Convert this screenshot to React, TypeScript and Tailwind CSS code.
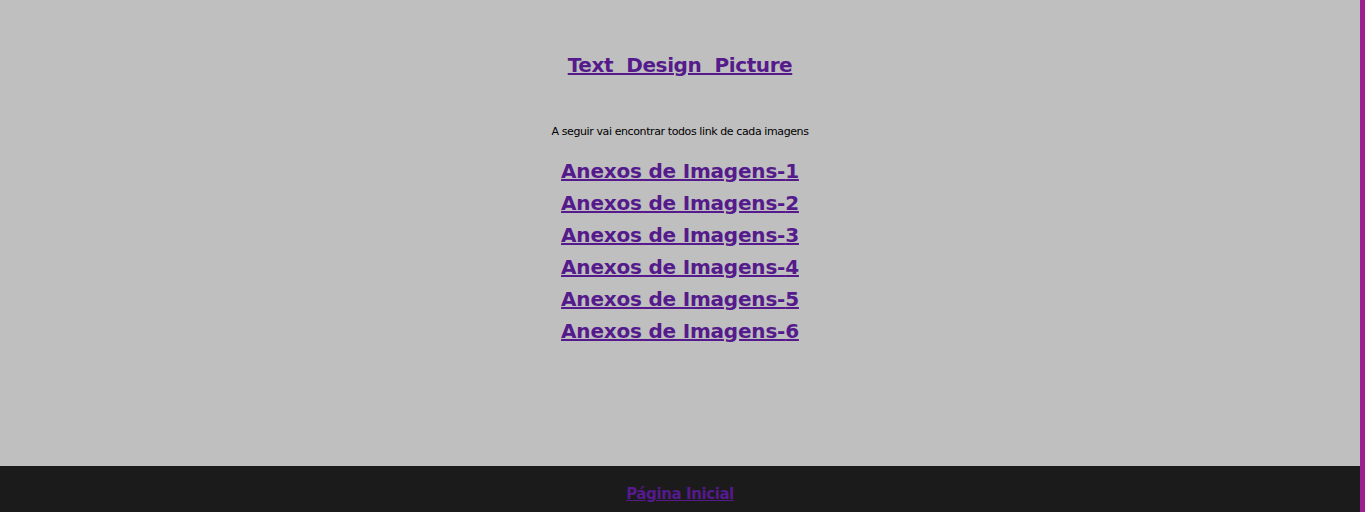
import React from "react";

const font = { fontFamily: '"Comic Sans MS", "DejaVu Sans", sans-serif' };

export default function App() {
  const links = [1, 2, 3, 4, 5, 6];
  return (
    <div className="flex h-[512px] w-full overflow-hidden" style={font}>
      <div className="flex flex-1 flex-col bg-[#bfbfbf]">
        <main className="flex h-[466px] flex-col items-center">
          <h1 className="mt-[52px] text-[20px] font-bold leading-[26px] tracking-[-0.4px]">
            <a href="#" className="text-[#551a8b] underline">Text&nbsp; Design&nbsp; Picture</a>
          </h1>
          <p className="mt-[47px] text-[11px] leading-[14px] tracking-[-0.4px] text-black">A seguir vai encontrar todos link de cada imagens</p>
          <ul className="mt-[16px] flex flex-col items-center">
            {links.map((n) => (
              <li key={n} className="text-[20px] font-bold leading-[32px] tracking-[-0.2px]">
                <a href="#" className="text-[#551a8b] underline">Anexos de Imagens-{n}</a>
              </li>
            ))}
          </ul>
        </main>
        <footer className="flex flex-1 items-start justify-center bg-[#1b1b1b] pt-[18px]">
          <a href="#" className="text-[15px] font-bold leading-[20px] tracking-[-0.4px] text-[#551a8b] underline">Página Inicial</a>
        </footer>
      </div>
      <div className="w-[5px] bg-[#9b2090]" />
    </div>
  );
}
